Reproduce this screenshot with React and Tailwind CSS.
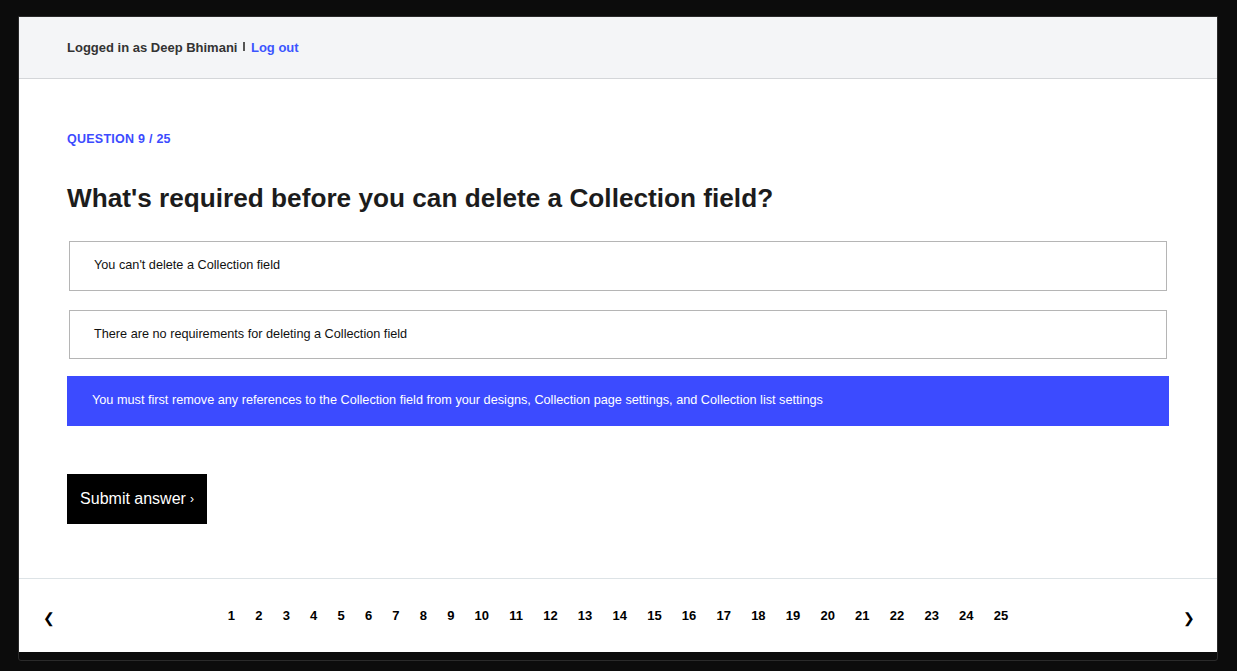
import React from 'react'

const options = [
  { id: 1, text: "You can't delete a Collection field" },
  { id: 2, text: 'There are no requirements for deleting a Collection field' },
  { id: 3, text: 'You must first remove any references to the Collection field from your designs, Collection page settings, and Collection list settings' },
]

const pages = Array.from({ length: 25 }, (_, i) => i + 1)

export default function App() {
  const selected = 3

  return (
    <div className="min-h-screen bg-[#0c0c0c] pt-[16px] pl-[18px]" style={{ fontFamily: '"Liberation Sans", Arial, sans-serif' }}>
      <div className="w-[1200px] h-[645px] border border-[#2a2a2a] rounded-b-[3px] flex flex-col pb-[8px]">
        <div className="bg-white flex-1 flex flex-col">
          {/* header */}
          <header className="h-[62px] bg-[#f4f5f7] border-b border-[#d4d6d9] flex items-center pl-[48px]">
            <span className="text-[13px] font-bold text-[#333]">Logged in as Deep Bhimani</span>
            <span className="inline-block w-[1.5px] h-[9px] bg-[#555] mx-[6px] -mt-[3px]" />
            <a href="#" className="text-[13px] font-bold text-[#3c55ff]">Log out</a>
          </header>

          {/* question */}
          <main className="flex-1 px-[48px] pt-[53px]">
            <div className="text-[12.5px] leading-[14px] font-bold text-[#3c4bff] tracking-[0.25px]">QUESTION 9 / 25</div>
            <h1 className="mt-[36px] text-[26.2px] leading-[32px] font-bold text-[#1c1c1c]">
              What's required before you can delete a Collection field?
            </h1>

            <div className="mt-[27px] flex flex-col">
              {options.map((o, i) =>
                o.id === selected ? (
                  <div key={o.id} className="mt-[17px] h-[50px] bg-[#3c4bff] flex items-center px-[25px] text-[12.7px] text-white">
                    {o.text}
                  </div>
                ) : (
                  <div key={o.id} className={`mx-[2px] border border-[#b5b5b5] flex items-center px-[24px] text-[12.7px] text-[#111] ${i === 0 ? 'h-[50px] mb-[19px]' : 'h-[49px]'}`}>
                    {o.text}
                  </div>
                )
              )}
            </div>

            <button className="mt-[48px] w-[140px] h-[50px] bg-black text-white text-[16px] flex items-center justify-center">
              Submit answer <span className="ml-[4px] text-[12px]">›</span>
            </button>
          </main>

          {/* pager */}
          <footer className="h-[74px] border-t border-[#dde3e6] flex items-center justify-between px-[24px]">
            <span className="w-[10px] text-[14px] text-black mt-[5px]" style={{ fontFamily: '"DejaVu Sans", sans-serif' }}>❮</span>
            <div className="flex items-center gap-[20.2px]">
              {pages.map(p => (
                <span key={p} className="text-[13px] font-bold text-black">{p}</span>
              ))}
            </div>
            <span className="w-[10px] text-[14px] text-black mt-[5px]" style={{ fontFamily: '"DejaVu Sans", sans-serif' }}>❯</span>
          </footer>
        </div>
      </div>
    </div>
  )
}
